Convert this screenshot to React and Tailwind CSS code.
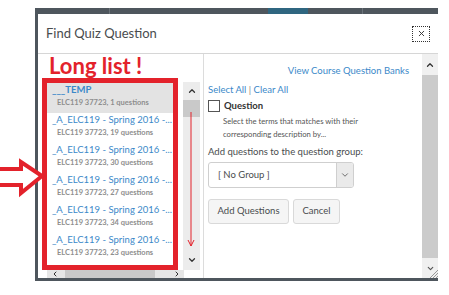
import { ChevronUp, ChevronDown, ChevronLeft, ChevronRight, X } from 'lucide-react';

const items = [
  { title: '___TEMP', sub: 'ELC119 37723, 1 questions', active: true },
  { title: '_A_ELC119 - Spring 2016 -...', sub: 'ELC119 37723, 19 questions' },
  { title: '_A_ELC119 - Spring 2016 -...', sub: 'ELC119 37723, 30 questions' },
  { title: '_A_ELC119 - Spring 2016 -...', sub: 'ELC119 37723, 27 questions' },
  { title: '_A_ELC119 - Spring 2016 -...', sub: 'ELC119 37723, 34 questions' },
  { title: '_A_ELC119 - Spring 2016 -...', sub: 'ELC119 37723, 23 questions' },
];

export default function App() {
  return (
    <div className="relative w-[449px] h-[295px] overflow-hidden bg-white font-['Lato',sans-serif] text-[#494c4e]">
      {/* dialog frame */}
      <div className="ml-[35px] mt-[8px] w-[403px] bg-[#4e565d] flex flex-col pb-[3px]">
        {/* page toolbar peeking behind the dialog */}
        <div className="h-[6px] flex">
          <div className="w-[74px]" />
          <div className="w-[1px] bg-[#6b737a]" />
          <div className="w-[158px]" />
          <div className="w-[40px] bg-[#2f6680]" />
          <div className="w-[54px]" />
          <div className="w-[1px] bg-[#6b737a]" />
          <div className="flex-1" />
        </div>
        <div className="ml-[3px] bg-white flex flex-col h-[264px]">
          {/* header */}
          <div className="h-[40px] shrink-0 flex items-center justify-between border-b border-[#d6d6d6] pl-[8px] pr-[8px]">
            <span className="text-[13px] leading-none">Find Quiz Question</span>
            <button className="w-[18px] h-[16px] border border-dotted border-[#333] flex items-center justify-center">
              <X className="w-[9px] h-[9px] text-[#333]" strokeWidth={2.5} />
            </button>
          </div>

          {/* body */}
          <div className="flex flex-1 min-h-0">
            {/* left column */}
            <div className="w-[166px] shrink-0 border-r border-[#dcdcdc] flex flex-col">
              <div className="h-[24px] pl-[11px] text-[22px] leading-[24px] font-bold text-[#e3222b]">Long list !</div>
              <div className="flex h-[192px] pl-[4px]">
                <div className="w-[136px] border-[5px] border-[#e3222b] overflow-hidden">
                  {items.map((it, i) => (
                    <div key={i} className={`h-[30px] ${it.active ? 'bg-[#e3e3e3]' : ''}`}>
                      <div className={`pl-[5px] text-[9.5px] leading-[14px] whitespace-nowrap text-[#3b89c9] ${it.active ? 'font-bold' : ''}`}>{it.title}</div>
                      <div className="pl-[10px] text-[7.5px] leading-[12px] font-bold whitespace-nowrap text-[#8e8e8e]">{it.sub}</div>
                    </div>
                  ))}
                </div>
                <div className="relative ml-[5px] mt-[4px] w-[17px] bg-[#ececec] flex flex-col">
                  <div className="h-[18px] flex items-center justify-center">
                    <ChevronUp className="w-[10px] h-[10px] text-[#333]" strokeWidth={3} />
                  </div>
                  <div className="h-[17px] bg-[#c9c9c9]" />
                  <div className="flex-1" />
                  <div className="h-[20px] flex items-center justify-center">
                    <ChevronDown className="w-[10px] h-[10px] text-[#333]" strokeWidth={3} />
                  </div>
                  {/* annotation arrow */}
                  <svg className="absolute left-0 top-[30px]" width="17" height="136" viewBox="0 0 17 136">
                    <line x1="8" y1="0" x2="8" y2="134" stroke="#e3222b" strokeWidth="1" />
                    <polyline points="5,128 8,134 11,128" fill="none" stroke="#e3222b" strokeWidth="1" />
                  </svg>
                </div>
              </div>
              <div className="ml-[9px] w-[137px] h-[8px] bg-[#e6e6e6] flex items-center">
                <ChevronLeft className="ml-[4px] w-[8px] h-[8px] text-[#333]" strokeWidth={3} />
                <div className="ml-[6px] w-[90px] h-[8px] bg-[#c9c9c9]" />
                <div className="flex-1" />
                <ChevronRight className="mr-[3px] w-[8px] h-[8px] text-[#333]" strokeWidth={3} />
              </div>
            </div>

            {/* right column */}
            <div className="flex-1 pl-[4px]">
              <div className="pt-[10px] pr-[13px] text-right text-[9.5px] leading-[14px] text-[#3b89c9]">View Course Question Banks</div>
              <div className="mt-[5px] text-[9.5px] leading-[14px]">
                <span className="text-[#3b89c9]">Select All</span>
                <span className="text-[#888]"> | </span>
                <span className="text-[#3b89c9]">Clear All</span>
              </div>
              <div className="mt-[2px] flex items-center gap-[4px] h-[14px]">
                <div className="w-[12px] h-[12px] border border-[#555] bg-white" />
                <span className="text-[9.5px] font-bold text-[#333]">Question</span>
              </div>
              <div className="mt-[2px] pl-[15px] text-[7.7px] leading-[13px] text-[#555]">
                <div>Select the terms that matches with their</div>
                <div>corresponding description by...</div>
              </div>
              <div className="mt-[4px] text-[9.5px] leading-[14px]">Add questions to the question group:</div>
              <div className="mt-[3px] w-[146px] h-[26px] border border-[#cfcfcf] rounded-[3px] flex overflow-hidden">
                <div className="flex-1 pl-[9px] text-[9.5px] flex items-center">[ No Group ]</div>
                <div className="w-[17px] bg-[#eaeaea] border-l border-[#cfcfcf] flex items-center justify-center">
                  <ChevronDown className="w-[10px] h-[10px] text-[#555]" strokeWidth={2} />
                </div>
              </div>
              <div className="mt-[11px] flex gap-[4px]">
                <button className="w-[81px] h-[25px] bg-[#f5f5f5] border border-[#d9d9d9] rounded-[3px] text-[9.5px] text-[#494c4e]">Add Questions</button>
                <button className="w-[47px] h-[25px] bg-[#f5f5f5] border border-[#d9d9d9] rounded-[3px] text-[9.5px] text-[#494c4e]">Cancel</button>
              </div>
            </div>

            {/* dialog scrollbar */}
            <div className="w-[16px] shrink-0 bg-[#f0f0f0] flex flex-col">
              <div className="h-[21px] flex items-center justify-center">
                <ChevronUp className="w-[10px] h-[10px] text-[#333]" strokeWidth={3} />
              </div>
              <div className="flex-1 bg-[#cbcbcb]" />
              <div className="h-[20px] relative flex items-center justify-center">
                <ChevronDown className="w-[9px] h-[9px] text-[#555]" strokeWidth={3} />
                <svg className="absolute right-0 bottom-0" width="9" height="9" viewBox="0 0 9 9">
                  <line x1="1" y1="9" x2="9" y2="1" stroke="#999" />
                  <line x1="4" y1="9" x2="9" y2="4" stroke="#999" />
                  <line x1="7" y1="9" x2="9" y2="7" stroke="#999" />
                </svg>
              </div>
            </div>
          </div>
        </div>
      </div>

      {/* annotation arrow pointing at list */}
      <svg className="absolute left-0 top-[158px]" width="46" height="40" viewBox="0 0 46 40">
        <polygon points="-5,11 21,11 21,4 42,18 21,35 21,27 -5,27" fill="white" stroke="#e3222b" strokeWidth="4" strokeLinejoin="miter" />
      </svg>
    </div>
  );
}
